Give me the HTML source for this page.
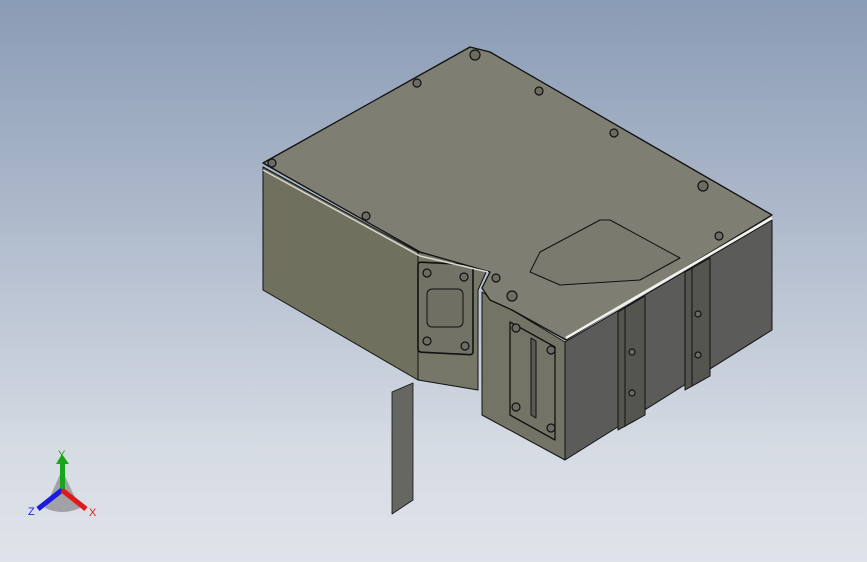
<!DOCTYPE html>
<html><head><style>
html,body{margin:0;padding:0;width:867px;height:562px;overflow:hidden}
body{background:linear-gradient(#8a9bb5 0%,#b4bfcf 45%,#d6dbe4 80%,#dfe3ea 100%)}
svg{position:absolute;left:0;top:0}
</style></head><body>
<svg width="867" height="562" viewBox="0 0 867 562" stroke="#111" stroke-width="1" stroke-linejoin="round">
<!-- shadow -->
<!-- left face -->
<polygon points="263,167 418,252 418,380 263,290" fill="#70705f"/>
<!-- notch flat panel -->
<polygon points="418,252 488,268 478,290 478,390 418,380" fill="#777768"/>
<rect x="418" y="262" width="55" height="90" rx="3" fill="#727266" stroke-width="1.6" transform="skewY(3)" transform-origin="418 262"/>
<rect x="427" y="289" width="36" height="38" rx="5" fill="#6f6f63"/>
<!-- right lower section front -->
<polygon points="482,292 565,342 565,460 482,415" fill="#747466"/>
<polygon points="510,322 555,347 555,440 510,415" fill="none" stroke-width="1.3"/>
<polygon points="531,338 536,341 536,418 531,415" fill="#5a5a52"/>
<!-- right face -->
<polygon points="565,342 772,220 772,330 565,460" fill="#5b5b59"/>
<polygon points="618,312 645,296 645,415 618,430" fill="#55554f"/>
<polygon points="685,272 710,258 710,376 685,390" fill="#55554f"/>
<line x1="625" y1="308" x2="625" y2="427"/><line x1="692" y1="268" x2="692" y2="386"/>
<!-- top face -->
<polygon points="263,163 470,47 490,52 772,215 566,340 512,310 490,300 482,288 490,272 420,252" fill="#7e7e72" stroke-width="1.3"/>
<polyline points="263,170 420,256 488,272" fill="none" stroke="#d8d8d0" stroke-width="1.5"/>
<polyline points="566,338 772,218" fill="none" stroke="#f2f2ea" stroke-width="2.5"/>
<polygon points="540,252 600,220 610,220 680,258 640,280 560,285 530,272" fill="#7a7a6e"/>
<!-- screws -->
<g fill="#6c6c62" stroke-width="1.2">
<circle cx="475" cy="55" r="5"/><circle cx="417" cy="83" r="4"/><circle cx="539" cy="91" r="4"/>
<circle cx="614" cy="133" r="4"/><circle cx="703" cy="186" r="5"/><circle cx="272" cy="163" r="4"/>
<circle cx="366" cy="216" r="4"/><circle cx="719" cy="236" r="4"/><circle cx="496" cy="278" r="4"/>
<circle cx="512" cy="296" r="5"/>
<circle cx="427" cy="273" r="4"/><circle cx="464" cy="277" r="4"/><circle cx="427" cy="341" r="4"/><circle cx="465" cy="346" r="4"/>
<circle cx="516" cy="328" r="4"/><circle cx="551" cy="350" r="4"/><circle cx="516" cy="407" r="4"/><circle cx="551" cy="428" r="4"/>
<circle cx="632" cy="352" r="3"/><circle cx="632" cy="393" r="3"/><circle cx="698" cy="314" r="3"/><circle cx="698" cy="355" r="3"/>
</g>
<!-- plate -->
<polygon points="392,392 413,383 413,500 392,514" fill="#666662" stroke-width="0.8"/>
<!-- triad -->
<g stroke="none">
<path d="M62,470 L45,508 Q62,516 80,508 Z" fill="#666" opacity="0.5"/>
<rect x="60" y="462" width="5" height="28" fill="#1aa61a"/>
<polygon points="56,464 69,464 62,454" fill="#1aa61a"/>
<line x1="62" y1="490" x2="38" y2="509" stroke="#1a1ae0" stroke-width="5"/>
<line x1="62" y1="490" x2="86" y2="509" stroke="#e01a1a" stroke-width="5"/>
</g>
<g font-family="Liberation Sans, sans-serif" font-size="11" stroke="none">
<text x="58" y="458" fill="#1aa61a">Y</text>
<text x="28" y="515" fill="#1a1ae0">Z</text>
<text x="89" y="516" fill="#e01a1a">X</text>
</g>
</svg>
</body></html>
